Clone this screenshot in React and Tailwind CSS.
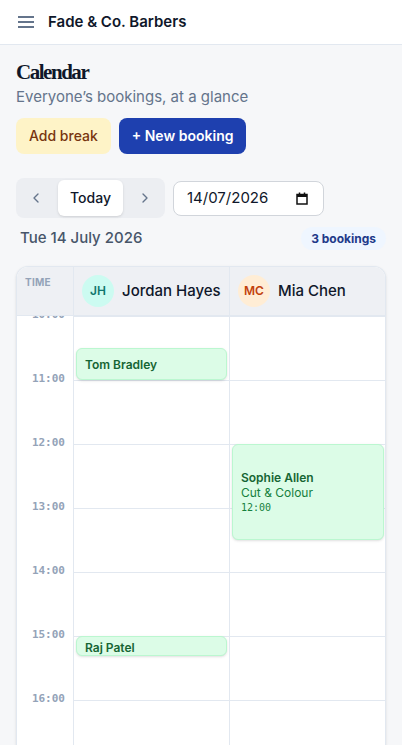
import React from "react";
import { ChevronLeft, ChevronRight } from "lucide-react";

const HOURS = ["10:00", "11:00", "12:00", "13:00", "14:00", "15:00", "16:00", "17:00", "18:00"];
const ROW = 64;

function Event({ top, height, name, service, time, right, nudge }) {
  return (
    <div
      className={`absolute left-[2px] ${right ? "right-[1px]" : "right-[2px]"} rounded-md border border-[#bbf7d0] bg-[#dcfce7] shadow-sm px-2 flex flex-col justify-center overflow-hidden ${nudge ? "pt-[2px]" : ""}`}
      style={{ top, height }}
    >
      <div className="text-[12px] leading-[15px] font-semibold text-[#166534]">{name}</div>
      {service && <div className="text-[12px] leading-[15px] text-[#15803d]">{service}</div>}
      {time && <div className="font-['DejaVu_Sans_Mono',monospace] text-[10px] leading-[15px] text-[#15803d]">{time}</div>}
    </div>
  );
}

function Column({ children }) {
  return (
    <div className="relative border-l border-[#e2e8f0]">
      {HOURS.map((h) => (
        <div key={h} className="h-16 border-t border-[#e2e8f0]" />
      ))}
      {children}
    </div>
  );
}

export default function App() {
  return (
    <div className="h-screen overflow-hidden flex flex-col bg-[#f6f7f9] font-[Inter,sans-serif] text-[#0f172a]">
      <header className="h-[45px] shrink-0 bg-white border-b border-[#e2e8f0] flex items-center px-[18px] gap-[14px]">
        <svg width="16" height="14" viewBox="0 0 16 14" className="text-[#64748b]">
          <path d="M0 2h16M0 7h16M0 12h16" stroke="currentColor" strokeWidth="2" />
        </svg>
        <div className="text-[15px] font-semibold text-[#0f172a] pt-px">Fade &amp; Co. Barbers</div>
      </header>

      <main className="px-4 pt-[13px] flex-1 min-h-0 flex flex-col">
        <h1 className="font-['Liberation_Serif',serif] font-bold text-[21px] tracking-[-0.07em] leading-[28px] text-[#0f172a]">Calendar</h1>
        <p className="text-[15px] leading-[22px] text-[#64748b]">Everyone’s bookings, at a glance</p>

        <div className="mt-[10px] flex gap-2">
          <button className="h-9 px-[13px] rounded-lg bg-[#fef3c7] text-[#78350f] text-sm font-medium">Add break</button>
          <button className="h-9 px-[13px] rounded-lg bg-[#1e40af] text-white text-sm font-semibold">+ New booking</button>
        </div>

        <div className="mt-6 flex items-center gap-2">
          <div className="flex items-center gap-1 p-[2px] rounded-lg bg-[#eceef2]">
            <button className="w-9 h-9 flex items-center justify-center text-[#64748b]">
              <ChevronLeft size={16} strokeWidth={2} />
            </button>
            <button className="h-9 w-[65px] rounded-md bg-white text-sm font-medium text-[#0f172a] shadow-sm">Today</button>
            <button className="w-9 h-9 flex items-center justify-center text-[#64748b]">
              <ChevronRight size={16} strokeWidth={2} />
            </button>
          </div>
          <div className="h-[35px] w-[151px] rounded-lg border border-[#d1d5db] bg-white flex items-center justify-between pl-[13px] pr-[15px] text-[15px] text-[#0f172a]">
            <span>14/07/2026</span>
            <svg width="12" height="13" viewBox="0 0 12 13">
              <rect x="1" y="2.5" width="10" height="9.5" fill="none" stroke="#111" strokeWidth="1.5" />
              <rect x="1" y="2.5" width="10" height="2.5" fill="#111" />
              <path d="M3.5 0.5v2.5M8.5 0.5v2.5" stroke="#111" strokeWidth="1.5" />
            </svg>
          </div>
        </div>

        <div className="mt-[9px] flex items-center justify-between pl-1">
          <div className="text-[15px] font-medium text-[#475569]">Tue 14 July 2026</div>
          <div className="h-[23px] px-[10px] rounded-full bg-[#eff6ff] text-[#1e3a8a] text-[12px] font-bold flex items-center">3 bookings</div>
        </div>

        <div className="mt-4 flex-1 min-h-0 rounded-t-xl border border-b-0 border-[#e2e8f0] bg-white shadow-sm overflow-hidden flex flex-col">
          <div className="h-[49px] shrink-0 grid grid-cols-[56px_1fr_1fr] bg-[#eef0f4] border-b border-[#e2e8f0]">
            <div className="pl-2 pt-[8px] text-[10px] leading-[14px] font-bold tracking-wide text-[#94a3b8]">TIME</div>
            <div className="border-l border-[#e2e8f0] flex items-center gap-2 pl-2">
              <div className="w-8 h-8 rounded-full bg-[#ccfbf1] text-[#0f766e] text-[12px] font-semibold flex items-center justify-center">JH</div>
              <div className="text-[15px] font-medium text-[#0f172a]">Jordan Hayes</div>
            </div>
            <div className="border-l border-[#e2e8f0] flex items-center gap-2 pl-2">
              <div className="w-8 h-8 rounded-full bg-[#ffedd5] text-[#c2410c] text-[12px] font-semibold flex items-center justify-center">MC</div>
              <div className="text-[15px] font-medium text-[#0f172a]">Mia Chen</div>
            </div>
          </div>

          <div className="flex-1 min-h-0 overflow-hidden">
            <div className="grid grid-cols-[56px_1fr_1fr]">
              <div className="relative">
                {HOURS.map((h, i) => (
                  <div
                    key={h}
                    className="absolute right-2 font-['DejaVu_Sans_Mono',monospace] text-[11px] leading-[12px] font-semibold text-[#94a3b8]"
                    style={{ top: i * ROW - 7 }}
                  >
                    {h}
                  </div>
                ))}
              </div>
              <Column>
                <Event top={32} height={32} name="Tom Bradley" />
                <Event top={320} height={20} name="Raj Patel" nudge />
              </Column>
              <Column>
                <Event top={128} height={96} name="Sophie Allen" service="Cut & Colour" time="12:00" right />
              </Column>
            </div>
          </div>
        </div>
      </main>
    </div>
  );
}
